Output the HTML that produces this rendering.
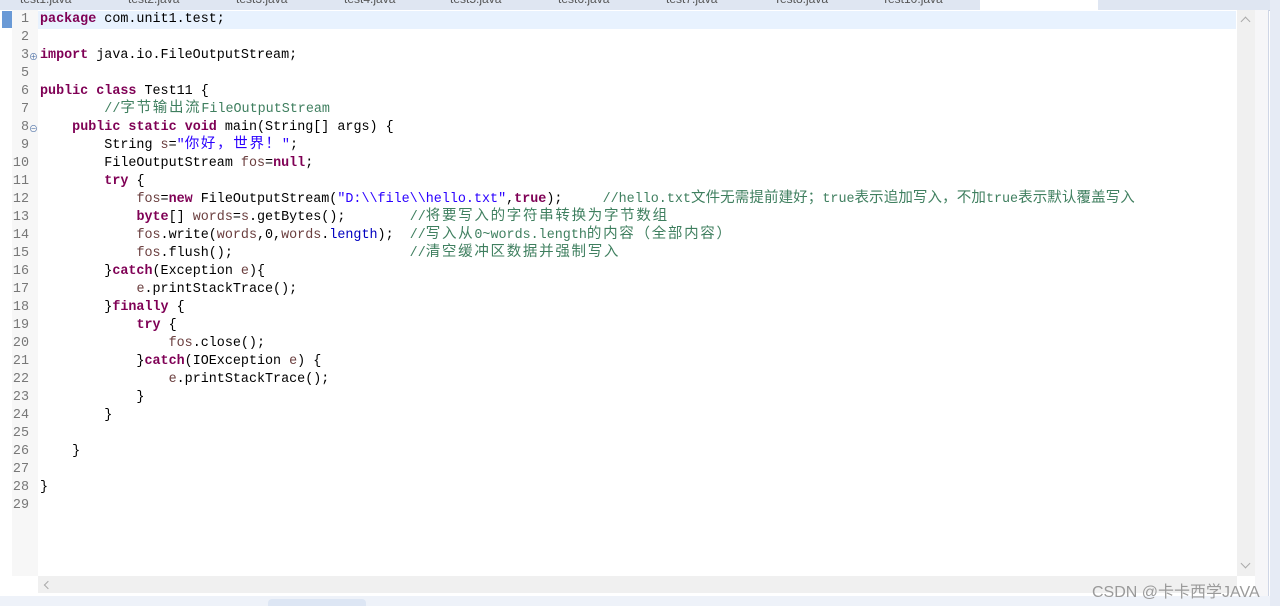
<!DOCTYPE html>
<html><head><meta charset="utf-8"><style>
body{margin:0;width:1280px;height:606px;overflow:hidden;background:#fff;position:relative;font-family:"Liberation Mono","Noto Sans CJK SC",monospace}
.tabs{position:absolute;left:0;top:0;width:1280px;height:10px;background:#dfe6f2;border-bottom:1px solid #c6d0e0;overflow:hidden}
.tab{position:absolute;top:-8px;font:12px "Liberation Sans",sans-serif;color:#555}
.frame{position:absolute;left:0;top:10px;width:1268px;height:586px;background:#fff;border-right:1px solid #cfd6e6}
.gutter{position:absolute;left:12px;top:10px;width:26px;height:566px;background:#f7f7f7}
.cur{position:absolute;left:38px;top:11px;width:1198px;height:18px;background:#e8f2fe}
.vs{position:absolute;left:1237px;top:10px;width:18px;height:566px;background:#f0f0f0}
.vs2{position:absolute;left:1255px;top:10px;width:13px;height:586px;background:#f6f6f8}
.hs{position:absolute;left:38px;top:576px;width:1199px;height:17px;background:#f0f0f0}
.bot{position:absolute;left:0;top:596px;width:1280px;height:10px;background:#eef2f9}
.side{position:absolute;left:1270px;top:0;width:10px;height:606px;background:#e6ebf5}
.ln{position:absolute;left:0;width:29px;text-align:right;color:#787878;font-size:13.4px;line-height:18px}
.code{position:absolute;left:40px;top:11px;font-size:13.4px;color:#000}
.code div{height:18px;line-height:18px;white-space:pre;overflow:visible}
.k{color:#7f0055;font-weight:bold}.c{color:#3f7f5f}.s{color:#2a00ff}.f{color:#0000c0}.v{color:#6a3e3e}
.z{font-family:"Noto Sans CJK SC",sans-serif;font-size:14.5px;letter-spacing:1.7px;line-height:0}
.y{letter-spacing:0.1px}
.wm{position:absolute;left:1092px;top:578px;font:16px "Liberation Sans","Noto Sans CJK SC",sans-serif;color:#9a9a9a}
</style></head><body>
<div class="tabs">
<span class="tab" style="left:20px">test1.java</span><span class="tab" style="left:128px">test2.java</span><span class="tab" style="left:236px">test3.java</span><span class="tab" style="left:344px">test4.java</span><span class="tab" style="left:450px">test5.java</span><span class="tab" style="left:558px">test6.java</span><span class="tab" style="left:666px">test7.java</span><span class="tab" style="left:774px">Test8.java</span><span class="tab" style="left:882px">Test10.java</span>
<div style="position:absolute;left:980px;top:0;width:118px;height:10px;background:#fff"></div>
</div>
<div class="frame"></div>
<div class="gutter"></div>
<div style="position:absolute;left:2px;top:11px;width:10px;height:17px;background:#6a9ad6"></div>
<div class="cur"></div>
<div class="vs"><div style="position:absolute;left:5px;top:8px;width:6px;height:6px;border-left:1px solid #aaa;border-top:1px solid #aaa;transform:rotate(45deg)"></div><div style="position:absolute;left:5px;top:550px;width:6px;height:6px;border-left:1px solid #aaa;border-top:1px solid #aaa;transform:rotate(225deg)"></div></div>
<div class="vs2"></div>
<div class="hs"><div style="position:absolute;left:7px;top:6px;width:5px;height:5px;border-left:1px solid #aaa;border-top:1px solid #aaa;transform:rotate(-45deg)"></div></div>
<div class="bot"><div style="position:absolute;left:268px;top:3px;width:98px;height:7px;background:#dde6f4;border-radius:4px 4px 0 0"></div></div>
<div class="side"></div>
<div style="position:absolute;left:0;top:11px">
<div class="ln" style="top:0">1</div><div class="ln" style="top:18px">2</div><div class="ln" style="top:36px">3</div><div class="ln" style="top:54px">5</div><div class="ln" style="top:72px">6</div><div class="ln" style="top:90px">7</div><div class="ln" style="top:108px">8</div><div class="ln" style="top:126px">9</div><div class="ln" style="top:144px">10</div><div class="ln" style="top:162px">11</div><div class="ln" style="top:180px">12</div><div class="ln" style="top:198px">13</div><div class="ln" style="top:216px">14</div><div class="ln" style="top:234px">15</div><div class="ln" style="top:252px">16</div><div class="ln" style="top:270px">17</div><div class="ln" style="top:288px">18</div><div class="ln" style="top:306px">19</div><div class="ln" style="top:324px">20</div><div class="ln" style="top:342px">21</div><div class="ln" style="top:360px">22</div><div class="ln" style="top:378px">23</div><div class="ln" style="top:396px">24</div><div class="ln" style="top:414px">25</div><div class="ln" style="top:432px">26</div><div class="ln" style="top:450px">27</div><div class="ln" style="top:468px">28</div><div class="ln" style="top:486px">29</div>
</div>
<div style="position:absolute;left:29px;top:50px;font-size:9px;color:#5577aa">⊕</div>
<div style="position:absolute;left:29px;top:122px;font-size:9px;color:#5577aa">⊖</div>
<div class="code">
<div><span class="k">package</span> com.unit1.test;</div>
<div></div>
<div><span class="k">import</span> java.io.FileOutputStream;</div>
<div></div>
<div><span class="k">public</span> <span class="k">class</span> Test11 {</div>
<div>        <span class="c">//<span class="z">字节输出流</span>FileOutputStream</span></div>
<div>    <span class="k">public</span> <span class="k">static</span> <span class="k">void</span> main(String[] args) {</div>
<div>        String <span class="v">s</span>=<span class="s">"<span class="z">你好，世界！</span>"</span>;</div>
<div>        FileOutputStream <span class="v">fos</span>=<span class="k">null</span>;</div>
<div>        <span class="k">try</span> {</div>
<div>            <span class="v">fos</span>=<span class="k">new</span> FileOutputStream(<span class="s">"D:\\file\\hello.txt"</span>,<span class="k">true</span>);     <span class="c">//hello.txt<span class="z y">文件无需提前建好；</span>true<span class="z y">表示追加写入，不加</span>true<span class="z y">表示默认覆盖写入</span></span></div>
<div>            <span class="k">byte</span>[] <span class="v">words</span>=<span class="v">s</span>.getBytes();        <span class="c">//<span class="z">将要写入的字符串转换为字节数组</span></span></div>
<div>            <span class="v">fos</span>.write(<span class="v">words</span>,0,<span class="v">words</span>.<span class="f">length</span>);  <span class="c">//<span class="z">写入从</span>0~words.length<span class="z">的内容（全部内容）</span></span></div>
<div>            <span class="v">fos</span>.flush();                      <span class="c">//<span class="z">清空缓冲区数据并强制写入</span></span></div>
<div>        }<span class="k">catch</span>(Exception <span class="v">e</span>){</div>
<div>            <span class="v">e</span>.printStackTrace();</div>
<div>        }<span class="k">finally</span> {</div>
<div>            <span class="k">try</span> {</div>
<div>                <span class="v">fos</span>.close();</div>
<div>            }<span class="k">catch</span>(IOException <span class="v">e</span>) {</div>
<div>                <span class="v">e</span>.printStackTrace();</div>
<div>            }</div>
<div>        }</div>
<div></div>
<div>    }</div>
<div></div>
<div>}</div>
</div>
<div class="wm">CSDN @卡卡西学JAVA</div>
</body></html>
